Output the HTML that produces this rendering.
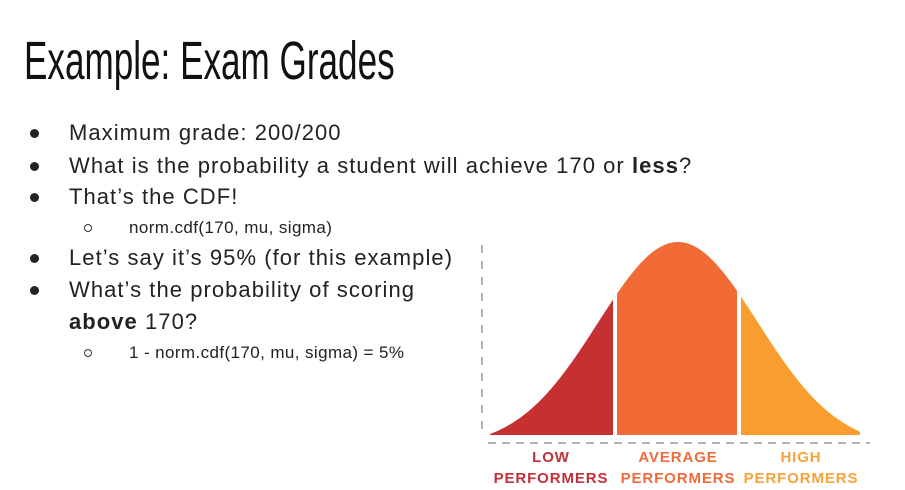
<!DOCTYPE html>
<html><head><meta charset="utf-8"><style>
body{margin:0;width:905px;height:490px;background:#fff;overflow:hidden;position:relative;font-family:"Liberation Sans",sans-serif;}
.t{position:absolute;left:24px;top:30px;font-size:54px;color:#111;transform:scaleX(0.65);transform-origin:left top;white-space:nowrap;}
.l{position:absolute;left:69px;font-size:22px;letter-spacing:1.05px;color:#222;white-space:nowrap}
.b{position:absolute;left:30px;width:9px;height:9px;border-radius:50%;background:#222}
.s{position:absolute;left:129px;font-size:17px;letter-spacing:0.4px;color:#222;white-space:nowrap}
.c{position:absolute;left:84px;width:6px;height:6px;border:1.3px solid #333;border-radius:50%}
.lab{position:absolute;font-weight:bold;font-size:15px;text-align:center;line-height:21px;letter-spacing:0.9px}
</style></head><body>
<div class="t">Example: Exam Grades</div>
<div class="b" style="top:129px"></div><div class="l" style="top:120px">Maximum grade: 200/200</div>
<div class="b" style="top:162px"></div><div class="l" style="top:153px">What is the probability a student will achieve 170 or <b>less</b>?</div>
<div class="b" style="top:193px"></div><div class="l" style="top:184px">That’s the CDF!</div>
<div class="c" style="top:224px"></div><div class="s" style="top:218px">norm.cdf(170, mu, sigma)</div>
<div class="b" style="top:254px"></div><div class="l" style="top:245px">Let’s say it’s 95% (for this example)</div>
<div class="b" style="top:286px"></div><div class="l" style="top:277px">What’s the probability of scoring</div>
<div class="l" style="top:309px"><b>above</b> 170?</div>
<div class="c" style="top:349px"></div><div class="s" style="top:343px">1 - norm.cdf(170, mu, sigma) = 5%</div>
<svg id="g" width="905" height="490" style="position:absolute;left:0;top:0">
<line x1="482" y1="245" x2="482" y2="437" stroke="#999" stroke-width="1.5" stroke-dasharray="8,8"/>
<line x1="488" y1="443" x2="870" y2="443" stroke="#999" stroke-width="1.5" stroke-dasharray="8,6"/>
</svg>
<div class="lab" style="left:486px;width:130px;top:447px;color:#c0313a">LOW<br>PERFORMERS</div>
<div class="lab" style="left:612px;width:132px;top:447px;color:#f06a3a">AVERAGE<br>PERFORMERS</div>
<div class="lab" style="left:736px;width:130px;top:447px;color:#f7a23a">HIGH<br>PERFORMERS</div>
<script>
var g=document.getElementById('g');
function f(x){var h=205*Math.exp(-Math.pow((x-678)/80,2)/2)-12;if(h<1)h=1;return 435-h;}
function seg(a,b,col){var d='M'+a+',435';for(var x=a;x<=b;x+=1)d+=' L'+x+','+f(x).toFixed(1);d+=' L'+b+',435 Z';
var p=document.createElementNS('http://www.w3.org/2000/svg','path');p.setAttribute('d',d);p.setAttribute('fill',col);g.appendChild(p);}
seg(490,613,'#c63030');seg(617,737,'#f26a35');seg(741,860,'#f99d2e');
</script>
</body></html>
